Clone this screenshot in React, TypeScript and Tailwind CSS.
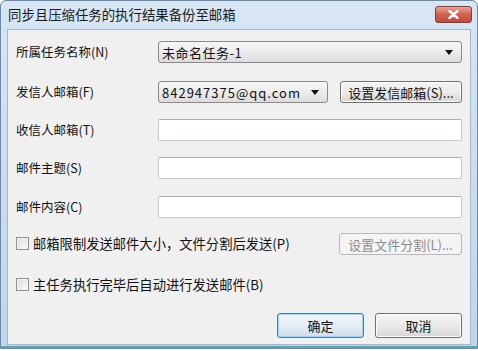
import React from 'react';

const font = { fontFamily: '"Noto Sans CJK SC", "Microsoft YaHei", sans-serif' };

function Caret() {
  return (
    <svg width="8" height="5" viewBox="0 0 8 5" className="shrink-0">
      <path d="M0 0 H8 L4 5 Z" fill="#111" />
    </svg>
  );
}

function Combo({ text, className, textClass = '' }: { text: string; className: string; textClass?: string }) {
  return (
    <div
      className={`h-[22px] flex items-center justify-between pl-[3px] pr-[8px] rounded-[3px] border border-[#8a8a8a] bg-gradient-to-b from-[#f6f6f6] via-[#ececec] to-[#dcdcdc] text-[13px] text-[#111] ${className}`}
    >
      <span className={`leading-none ${textClass}`}>{text}</span>
      <Caret />
    </div>
  );
}

function TextBox() {
  return (
    <div className="h-[22px] flex-1 bg-white border border-[#c5c9cf] border-t-[#abadb3] rounded-[2px]" />
  );
}

function Btn({
  label,
  className = '',
  disabled = false,
  primary = false,
}: {
  label: string;
  className?: string;
  disabled?: boolean;
  primary?: boolean;
}) {
  const tone = disabled
    ? 'border-[#b5b9bd] bg-[#f4f4f4] text-[#8d8d8d]'
    : primary
      ? 'border-[#3c7fb1] bg-gradient-to-b from-[#f2f6fa] via-[#e6eef6] to-[#cfdde9] text-[#111] shadow-[inset_0_0_0_1px_#9fd6f3]'
      : 'border-[#707070] bg-gradient-to-b from-[#f4f4f4] via-[#ebebeb] to-[#d6d6d6] text-[#111] shadow-[inset_0_0_0_1px_#fcfcfc]';
  return (
    <div className={`flex items-center justify-center rounded-[3px] border text-[13px] leading-none ${tone} ${className}`}>
      {label}
    </div>
  );
}

function Check({ label }: { label: string }) {
  return (
    <div className="flex items-center gap-[4px]">
      <div className="w-[13px] h-[13px] border border-[#8f8f8f] bg-gradient-to-br from-[#dcdcdc] to-[#fbfbfb] shadow-[inset_0_0_0_1px_#f4f4f4]" />
      <span className="text-[13.3px] text-[#111] leading-none">{label}</span>
    </div>
  );
}

function Row({ label, children, className = '' }: { label: string; children: React.ReactNode; className?: string }) {
  return (
    <div className={`flex items-center h-[22px] ${className}`}>
      <span className="w-[142px] text-[12.5px] text-[#111] leading-none">{label}</span>
      {children}
    </div>
  );
}

export default function App() {
  return (
    <div style={font} className="w-[478px] h-[351px] bg-white">
      <div className="w-[478px] h-[349px] rounded-t-[6px] border border-[#6c8aa8] bg-gradient-to-b from-[#d8e6f4] via-[#cbddef] to-[#c0d5ec] flex flex-col">
        {/* Title bar */}
        <div className="h-[28px] flex items-center justify-between pl-[7px] pr-[5px]">
          <span className="text-[13.4px] text-[#1b1b1b] leading-none">同步且压缩任务的执行结果备份至邮箱</span>
          <div className="w-[37px] h-[17px] -mt-[2px] rounded-[3px] border border-[#8a3a35] bg-gradient-to-b from-[#e8a497] via-[#d0614f] to-[#c24a3a] flex items-center justify-center">
            <svg width="11" height="9" viewBox="0 0 11 9">
              <path d="M1.5 1 L9.5 8 M9.5 1 L1.5 8" stroke="#fff" strokeWidth="2.4" strokeLinecap="round" />
            </svg>
          </div>
        </div>

        {/* Client area */}
        <div className="mx-[6px] h-[316px] bg-[#f0f0f0] border border-[#a3b8cf] flex flex-col pl-[8px] pr-[8px] pt-[11px]">
          <Row label="所属任务名称(N)">
            <Combo text="未命名任务-1" className="flex-1" textClass="tracking-[0.5px]" />
          </Row>
          <Row label="发信人邮箱(F)" className="mt-[18px]">
            <Combo text="842947375@qq.com" className="w-[170px]" textClass="tracking-[1px]" />
            <Btn label="设置发信邮箱(S)..." className="ml-[12px] flex-1 h-[22px]" />
          </Row>
          <Row label="收信人邮箱(T)" className="mt-[16px]">
            <TextBox />
          </Row>
          <Row label="邮件主题(S)" className="mt-[16px]">
            <TextBox />
          </Row>
          <Row label="邮件内容(C)" className="mt-[17px]">
            <TextBox />
          </Row>
          <div className="mt-[15px] h-[22px] flex items-center justify-between">
            <Check label="邮箱限制发送邮件大小，文件分割后发送(P)" />
            <Btn label="设置文件分割(L)..." disabled className="w-[123px] h-[22px]" />
          </div>
          <div className="mt-[19px] h-[22px] flex items-center">
            <Check label="主任务执行完毕后自动进行发送邮件(B)" />
          </div>
          <div className="mt-[17px] flex justify-end gap-[11px]">
            <Btn label="确定" primary className="w-[87px] h-[25px]" />
            <Btn label="取消" className="w-[87px] h-[25px]" />
          </div>
        </div>
        <div className="flex-1" />
        <div className="h-[2px] bg-[#5aa3b9]" />
      </div>
    </div>
  );
}
